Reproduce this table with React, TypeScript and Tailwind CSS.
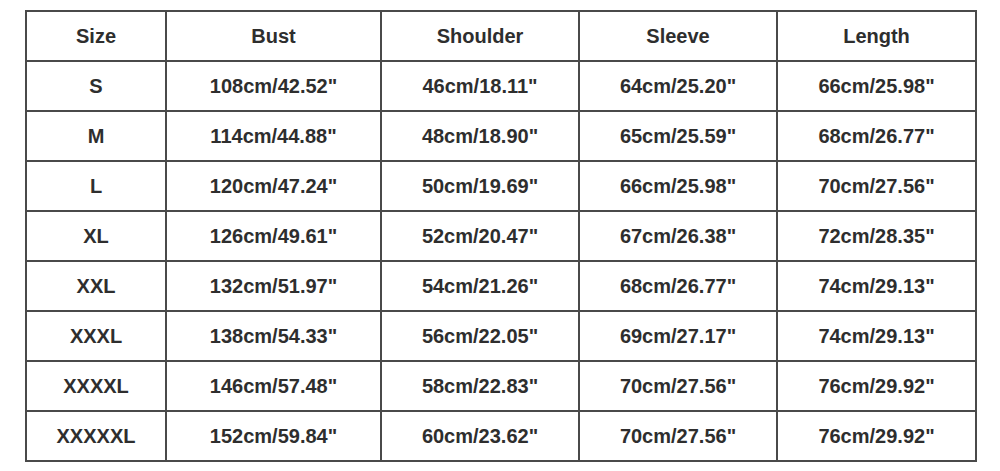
const headers = ['Size', 'Bust', 'Shoulder', 'Sleeve', 'Length'];

const rows = [
  ['S', '108cm/42.52"', '46cm/18.11"', '64cm/25.20"', '66cm/25.98"'],
  ['M', '114cm/44.88"', '48cm/18.90"', '65cm/25.59"', '68cm/26.77"'],
  ['L', '120cm/47.24"', '50cm/19.69"', '66cm/25.98"', '70cm/27.56"'],
  ['XL', '126cm/49.61"', '52cm/20.47"', '67cm/26.38"', '72cm/28.35"'],
  ['XXL', '132cm/51.97"', '54cm/21.26"', '68cm/26.77"', '74cm/29.13"'],
  ['XXXL', '138cm/54.33"', '56cm/22.05"', '69cm/27.17"', '74cm/29.13"'],
  ['XXXXL', '146cm/57.48"', '58cm/22.83"', '70cm/27.56"', '76cm/29.92"'],
  ['XXXXXL', '152cm/59.84"', '60cm/23.62"', '70cm/27.56"', '76cm/29.92"'],
];

export default function App() {
  return (
    <div className="w-[1000px] h-[471px] bg-white pt-[10px] pl-[25px] font-['Liberation_Sans',Arial,sans-serif]">
      <div className="grid w-fit grid-cols-[138px_213px_196px_196px_197px] auto-rows-[48px] gap-[2px] bg-[#4a4a4a] p-[2px]">
        {headers.map((h) => (
          <div key={h} className="flex items-center justify-center bg-white text-[20px] font-bold text-[#2e2e2e]">
            {h}
          </div>
        ))}
        {rows.map((r) =>
          r.map((c, i) => (
            <div key={r[0] + i} className="flex items-center justify-center bg-white text-[20px] font-bold text-[#2e2e2e]">
              {c}
            </div>
          ))
        )}
      </div>
    </div>
  );
}
